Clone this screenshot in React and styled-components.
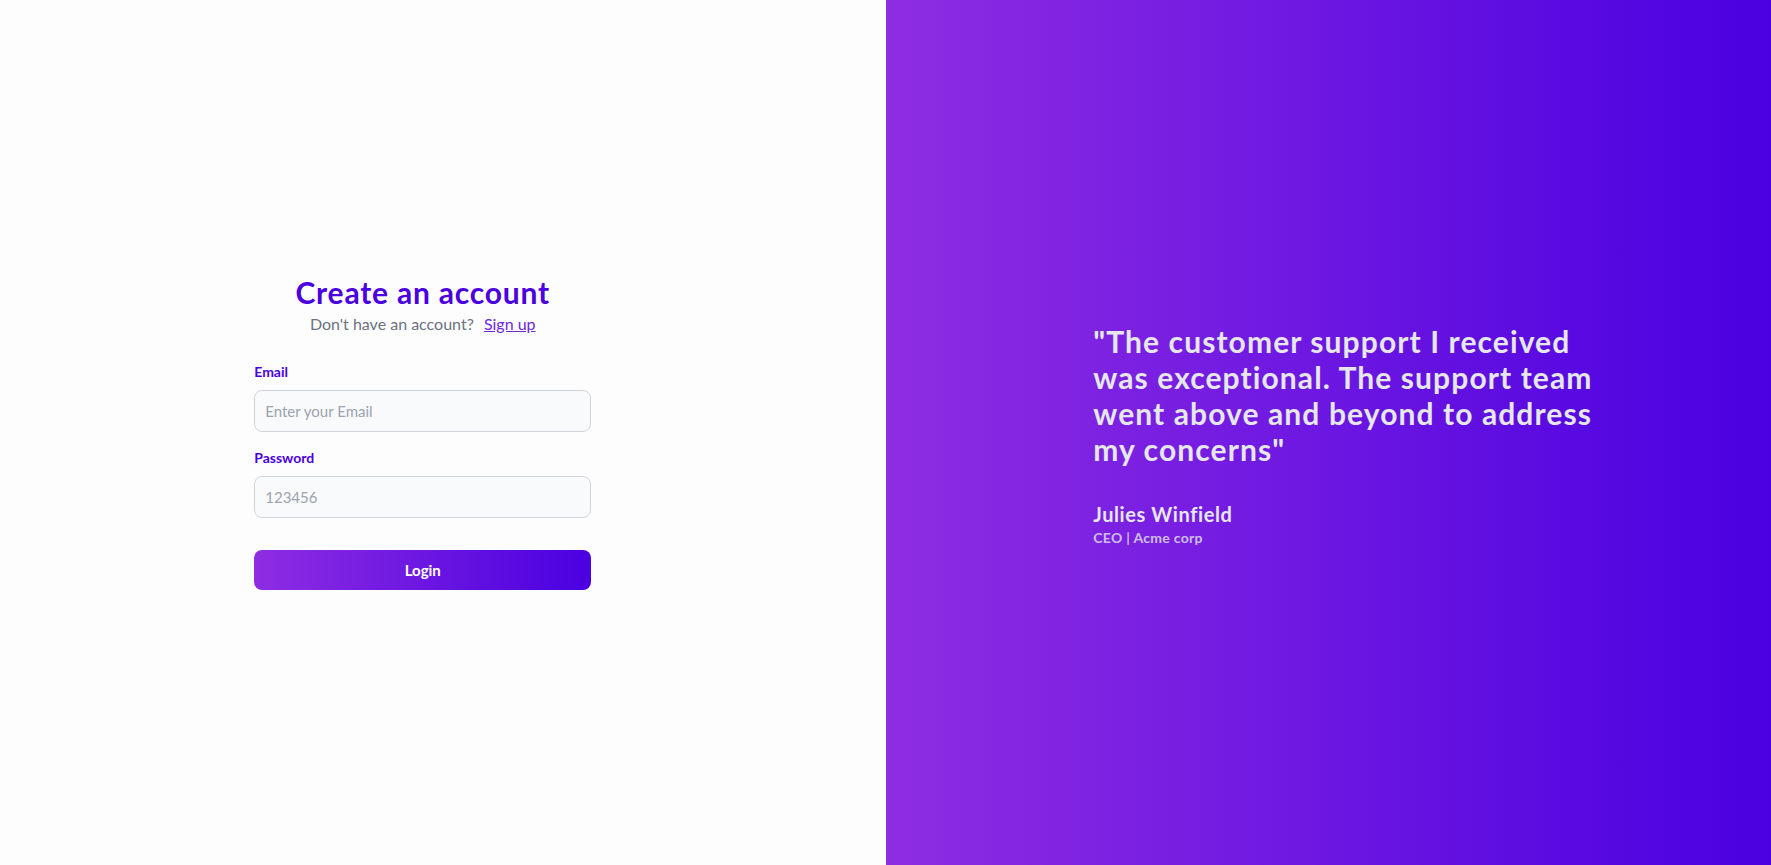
import React from 'react';
import styled, {createGlobalStyle} from 'styled-components';

const GlobalStyle = createGlobalStyle`
    html, body {
        margin: 0;
        padding: 0;
    }
    body {
        font-family: Lato, 'Noto Sans', sans-serif;
        background: #fff;
    }
    * {
        box-sizing: border-box;
    }
`;

const Page = styled.div`
    display: grid;
    grid-template-columns: 1fr 1fr;
    min-height: 100vh;
`;

const LeftPanel = styled.section`
    display: flex;
    align-items: center;
    justify-content: center;
    padding-right: 40px;
    background: #fdfdfd;
`;

const Form = styled.form`
    width: 337px;
    display: flex;
    flex-direction: column;
`;

const Title = styled.h1`
    margin: 0;
    text-align: center;
    font-size: 30px;
    line-height: 32px;
    font-weight: 700;
    letter-spacing: 0.8px;
    color: #4a00e0;
`;

const Subtitle = styled.p`
    margin: 4px 0 0;
    text-align: center;
    font-size: 16px;
    line-height: 24px;
    color: #6b7280;
`;

const SignUp = styled.a`
    margin-left: 6px;
    color: #6d28d9;
    text-decoration: underline;
    cursor: pointer;
`;

const Label = styled.label`
    margin-top: ${props => props.first ? '26px' : '16px'};
    font-size: 14px;
    line-height: 20px;
    font-weight: 700;
    color: #4a00e0;
`;

const Input = styled.input`
    margin-top: 8px;
    height: 42px;
    padding: 0 10px;
    border: 1px solid #d1d5db;
    border-radius: 8px;
    background: #f9fafb;
    font-family: inherit;
    font-size: 15px;
    color: #111827;

    &::placeholder {
        color: #9ca3af;
    }

    &:focus {
        outline: none;
    }
`;

const LoginBtn = styled.button`
    margin-top: 32px;
    height: 40px;
    border: none;
    border-radius: 8px;
    background: linear-gradient(to right, #8e2de2, #4a00e0);
    color: #fff;
    font-family: inherit;
    font-size: 15px;
    font-weight: 700;
    cursor: pointer;
`;

const RightPanel = styled.section`
    display: flex;
    align-items: center;
    justify-content: center;
    padding: 5px 0 0 40px;
    background: linear-gradient(to right, #8e2de2, #4a00e0);
`;

const Testimonial = styled.div`
    width: 510px;
    color: #e5e7eb;
`;

const Quote = styled.p`
    margin: 0;
    font-size: 30px;
    line-height: 36px;
    font-weight: 700;
    letter-spacing: 1.1px;
`;

const Author = styled.div`
    margin-top: 33px;
    font-size: 20px;
    line-height: 28px;
    font-weight: 700;
    letter-spacing: 0.6px;
`;

const Role = styled.div`
    font-size: 14px;
    line-height: 20px;
    font-weight: 700;
    letter-spacing: 0.3px;
    color: rgba(229, 231, 235, 0.8);
`;

export default function App() {
    return (
        <>
            <GlobalStyle />
            <Page>
                <LeftPanel>
                    <Form onSubmit={e => e.preventDefault()}>
                        <Title>Create an account</Title>
                        <Subtitle>
                            Don't have an account? <SignUp>Sign up</SignUp>
                        </Subtitle>
                        <Label first htmlFor="email">Email</Label>
                        <Input id="email" type="email" placeholder="Enter your Email" />
                        <Label htmlFor="password">Password</Label>
                        <Input id="password" type="password" placeholder="123456" />
                        <LoginBtn type="submit">Login</LoginBtn>
                    </Form>
                </LeftPanel>
                <RightPanel>
                    <Testimonial>
                        <Quote>
                            "The customer support I received was exceptional. The support team went above and beyond to address my concerns"
                        </Quote>
                        <Author>Julies Winfield</Author>
                        <Role>CEO | Acme corp</Role>
                    </Testimonial>
                </RightPanel>
            </Page>
        </>
    );
}
